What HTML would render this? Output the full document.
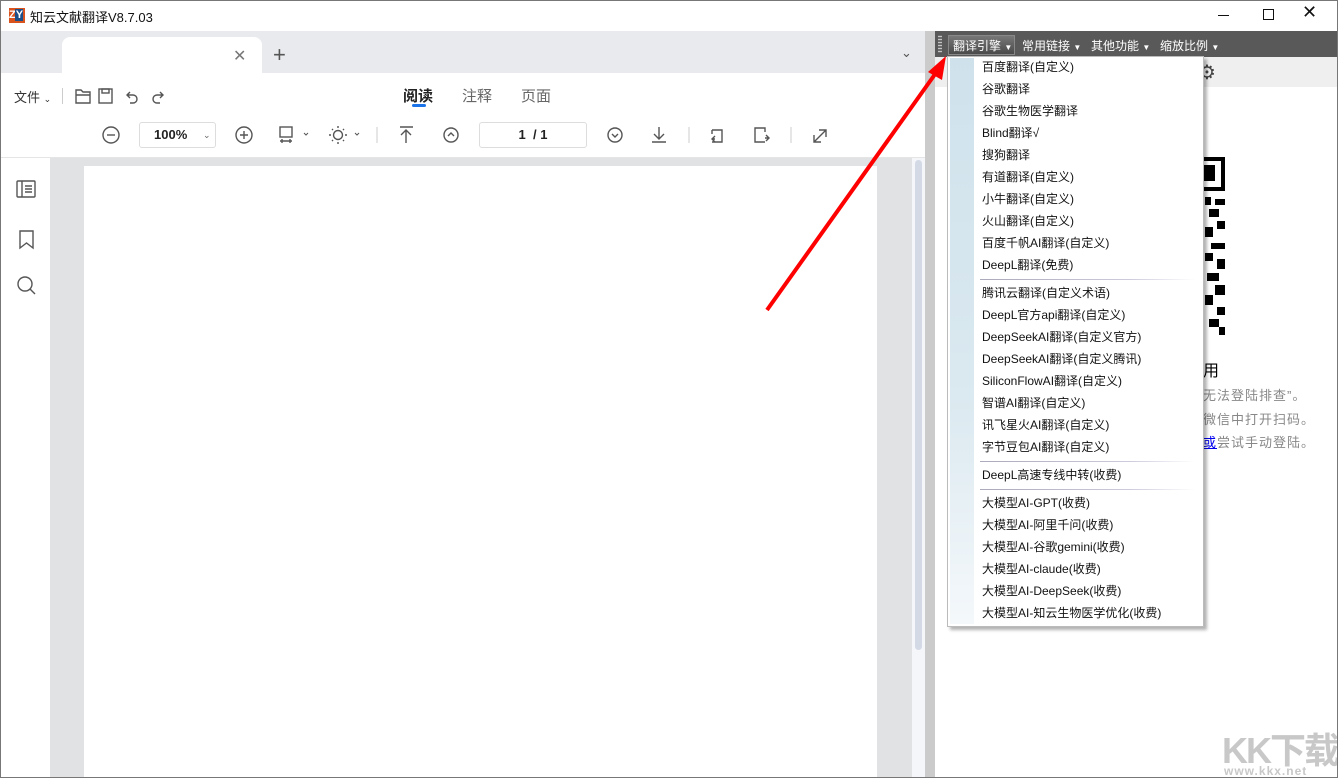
<!DOCTYPE html>
<html><head><meta charset="utf-8"><style>
*{margin:0;padding:0;box-sizing:border-box}
body{width:1338px;height:778px;overflow:hidden;position:relative;background:#fff;font-family:"Liberation Sans","Noto Sans CJK SC",sans-serif;font-size:13px;color:#333}
.a{position:absolute}
.mi{position:absolute;left:982px;font-size:12px;color:#111;height:22px;line-height:22px;white-space:nowrap}
.sep{position:absolute;left:980px;width:215px;height:1px;background:linear-gradient(90deg,#aab,#ccd 70%,#fff)}
.ic{stroke:#555;fill:none;stroke-width:1.4}
</style></head><body>
<div class="a" style="left:0;top:0;width:1338px;height:778px;border:1px solid #777;pointer-events:none;z-index:9"></div>
<!-- title -->
<div class="a" style="left:9px;top:8px;width:16px;height:15px;background:#d9531e;color:#fff;font:bold 11px 'Liberation Sans';line-height:15px;letter-spacing:-1px">Z<span style="background:#1b4f8a;padding:0 1px">Y</span></div>
<div class="a" style="left:30px;top:7px;font-size:13px;color:#111">知云文献翻译V8.7.03</div>
<div class="a" style="left:1218px;top:15px;width:11px;height:1px;background:#111"></div>
<div class="a" style="left:1263px;top:9px;width:11px;height:11px;border:1px solid #111"></div>
<div class="a" style="left:1302px;top:2px;font-size:18px;color:#111">✕</div>
<!-- tab bar -->
<div class="a" style="left:1px;top:31px;width:927px;height:42px;background:#e8eaed"></div>
<div class="a" style="left:62px;top:37px;width:200px;height:36px;background:#fff;border-radius:8px 8px 0 0"></div>
<div class="a" style="left:233px;top:46px;font-size:16px;color:#777">✕</div>
<div class="a" style="left:273px;top:42px;font-size:22px;color:#555">+</div>
<div class="a" style="left:901px;top:45px;font-size:13px;color:#555">⌄</div>
<!-- toolbar -->
<div class="a" style="left:14px;top:87px;font-size:13px">文件 <span style="font-size:9px">⌄</span></div>
<div class="a" style="left:62px;top:88px;width:1px;height:16px;background:#ccc"></div>
<svg class="a" style="left:74px;top:86px" width="100" height="20"><path class="ic" d="M2 4h5l2 2h7v11H2z M2 9h14" stroke="#777"/><rect x="25" y="3" width="13" height="14" class="ic" stroke="#aaa"/><rect x="28" y="3" width="7" height="4" class="ic" stroke="#aaa"/><path class="ic" stroke="#aaa" d="M56 6l-3 3 3 3M53 9h6a4 4 0 0 1 0 8h-3"/><path class="ic" stroke="#aaa" d="M86 6l3 3-3 3M89 9h-6a4 4 0 0 0 0 8h3"/></svg>
<div class="a" style="left:403px;top:85px;font-size:15px;font-weight:bold;color:#222">阅读</div>
<div class="a" style="left:412px;top:104px;width:14px;height:3px;background:#1a73e8;border-radius:2px"></div>
<div class="a" style="left:462px;top:85px;font-size:15px;color:#666">注释</div>
<div class="a" style="left:521px;top:85px;font-size:15px;color:#666">页面</div>
<svg class="a" style="left:100px;top:122px" width="740" height="26">
<g class="ic" stroke="#444"><circle cx="11" cy="13" r="8"/><path d="M7 13h8"/><circle cx="144" cy="13" r="8"/><path d="M140 13h8M144 9v8"/>
<rect x="180" y="5" width="12" height="10"/><path d="M180 19h12M182 17v4M190 17v4"/><path d="M204 11l2 2 2-2" stroke-width="1"/>
<circle cx="238" cy="13" r="4.5"/><path d="M238 4v2M238 20v2M229 13h2M245 13h2M232 7l1 1M243 18l1 1M232 19l1-1M243 8l1-1"/><path d="M255 11l2 2 2-2" stroke-width="1"/></g>
<path d="M277 5v16" stroke="#ccc"/>
<g class="ic" stroke="#999"><path d="M300 5h13M306 21V8M301 13l5-5 5 5"/><circle cx="351" cy="13" r="7"/><path d="M348 14l3-3 3 3"/>
<circle cx="515" cy="13" r="7"/><path d="M512 12l3 3 3-3"/><path d="M559 5v12M554 12l5 5 5-5M552 20h14"/></g>
<path d="M589 5v16M691 5v16" stroke="#ccc"/>
<g class="ic" stroke="#666"><path d="M612 8h10v12h-10M612 8v4M612 17l3 0M615 14l-3 3 3 3"/><path d="M665 20h-10V6h10v4M665 16h3M666 13l3 3-3 3"/><path d="M714 20l12-12M719 8h7v7M714 13v7h7"/></g>
</svg>
<div class="a" style="left:139px;top:122px;width:77px;height:26px;border:1px solid #ddd;border-radius:3px;font-size:13px;font-weight:bold;line-height:24px;padding-left:14px;color:#222">100%<span style="position:absolute;left:63px;top:0;font-size:9px;color:#666;font-weight:normal">⌄</span></div>
<div class="a" style="left:479px;top:122px;width:108px;height:26px;border:1px solid #ddd;border-radius:3px;font-size:13px;font-weight:bold;line-height:24px;text-align:center;color:#222">1 &nbsp;/ 1</div>
<!-- content -->
<div class="a" style="left:1px;top:157px;width:927px;height:1px;background:#e5e5e5"></div>
<svg class="a" style="left:14px;top:178px" width="26" height="120"><g class="ic" stroke="#666"><rect x="3" y="3" width="18" height="16" rx="1"/><path d="M8 3v16M11 8h7M11 11h7M11 14h7"/><path d="M6 53h13v17l-6.5-5-6.5 5z"/><circle cx="11" cy="106" r="7"/><path d="M16 111l5 5"/></g></svg>
<div class="a" style="left:50px;top:158px;width:862px;height:620px;background:#e1e2e4"></div>
<div class="a" style="left:84px;top:166px;width:793px;height:612px;background:#fff"></div>
<div class="a" style="left:912px;top:158px;width:13px;height:620px;background:#f4f6fa"></div>
<div class="a" style="left:915px;top:160px;width:7px;height:490px;background:#d4d9e6;border-radius:4px"></div>
<div class="a" style="left:925px;top:31px;width:10px;height:747px;background:#cbcbcb"></div>
<!-- right panel -->
<div class="a" style="left:935px;top:31px;width:403px;height:26px;background:#595959"></div>
<div class="a" style="left:938px;top:35px;width:4px;height:18px;background:radial-gradient(circle,#ddd 40%,transparent 50%) 0 0/2px 3px"></div>
<div class="a" style="left:948px;top:35px;width:67px;height:20px;background:linear-gradient(#777,#4a4a4a);border:1px solid #888"></div>
<div class="a" style="left:953px;top:37px;font-size:12px;color:#fff;white-space:nowrap">翻译引擎 <span style="font-size:8px">▼</span></div>
<div class="a" style="left:1022px;top:37px;font-size:12px;color:#fff;white-space:nowrap">常用链接 <span style="font-size:8px">▼</span></div>
<div class="a" style="left:1091px;top:37px;font-size:12px;color:#fff;white-space:nowrap">其他功能 <span style="font-size:8px">▼</span></div>
<div class="a" style="left:1160px;top:37px;font-size:12px;color:#fff;white-space:nowrap">缩放比例 <span style="font-size:8px">▼</span></div>
<div class="a" style="left:935px;top:57px;width:403px;height:30px;background:#efefef"></div>
<div class="a" style="left:1198px;top:60px;font-size:20px;color:#444">⚙</div>
<!-- QR fragment -->
<svg class="a" style="left:1203px;top:155px" width="24" height="185"><rect x="0" y="2" width="22" height="34" fill="#000"/><rect x="0" y="6" width="18" height="26" fill="#fff"/><rect x="0" y="10" width="12" height="16" fill="#000"/>
<g fill="#000"><rect x="2" y="42" width="6" height="8"/><rect x="12" y="44" width="10" height="6"/><rect x="6" y="54" width="10" height="8"/><rect x="14" y="66" width="8" height="8"/><rect x="2" y="72" width="8" height="10"/><rect x="8" y="88" width="14" height="6"/><rect x="2" y="98" width="8" height="8"/><rect x="14" y="104" width="8" height="10"/><rect x="4" y="118" width="12" height="8"/><rect x="12" y="130" width="10" height="10"/><rect x="2" y="140" width="8" height="10"/><rect x="14" y="152" width="8" height="8"/><rect x="6" y="164" width="10" height="8"/><rect x="16" y="172" width="6" height="8"/></g></svg>
<div class="a" style="left:1203px;top:357px;font-size:16px;color:#000">用</div>
<div class="a" style="left:1203px;top:385px;font-size:13px;color:#888;white-space:nowrap;letter-spacing:1px">无法登陆排查”。</div>
<div class="a" style="left:1203px;top:409px;font-size:13px;color:#888;white-space:nowrap;letter-spacing:1px">微信中打开扫码。</div>
<div class="a" style="left:1203px;top:432px;font-size:13px;color:#888;white-space:nowrap;letter-spacing:1px"><span style="color:#00e;text-decoration:underline">或</span>尝试手动登陆。</div>
<!-- menu -->
<div class="a" style="left:947px;top:56px;width:257px;height:571px;background:#fff;border:1px solid #bbb;box-shadow:3px 3px 3px rgba(0,0,0,.3)"></div>
<div class="a" style="left:950px;top:58px;width:24px;height:566px;background:linear-gradient(#cfe2ec,#dbe9f0 60%,#f4f8fb)"></div>
<div class="mi" style="top:56px">百度翻译(自定义)</div>
<div class="mi" style="top:78px">谷歌翻译</div>
<div class="mi" style="top:100px">谷歌生物医学翻译</div>
<div class="mi" style="top:122px">Blind翻译√</div>
<div class="mi" style="top:144px">搜狗翻译</div>
<div class="mi" style="top:166px">有道翻译(自定义)</div>
<div class="mi" style="top:188px">小牛翻译(自定义)</div>
<div class="mi" style="top:210px">火山翻译(自定义)</div>
<div class="mi" style="top:232px">百度千帆AI翻译(自定义)</div>
<div class="mi" style="top:254px">DeepL翻译(免费)</div>
<div class="sep" style="top:279px"></div>
<div class="mi" style="top:282px">腾讯云翻译(自定义术语)</div>
<div class="mi" style="top:304px">DeepL官方api翻译(自定义)</div>
<div class="mi" style="top:326px">DeepSeekAI翻译(自定义官方)</div>
<div class="mi" style="top:348px">DeepSeekAI翻译(自定义腾讯)</div>
<div class="mi" style="top:370px">SiliconFlowAI翻译(自定义)</div>
<div class="mi" style="top:392px">智谱AI翻译(自定义)</div>
<div class="mi" style="top:414px">讯飞星火AI翻译(自定义)</div>
<div class="mi" style="top:436px">字节豆包AI翻译(自定义)</div>
<div class="sep" style="top:461px"></div>
<div class="mi" style="top:464px">DeepL高速专线中转(收费)</div>
<div class="sep" style="top:489px"></div>
<div class="mi" style="top:492px">大模型AI-GPT(收费)</div>
<div class="mi" style="top:514px">大模型AI-阿里千问(收费)</div>
<div class="mi" style="top:536px">大模型AI-谷歌gemini(收费)</div>
<div class="mi" style="top:558px">大模型AI-claude(收费)</div>
<div class="mi" style="top:580px">大模型AI-DeepSeek(收费)</div>
<div class="mi" style="top:602px">大模型AI-知云生物医学优化(收费)</div>
<!-- arrow -->
<svg class="a" style="left:0;top:0" width="1338" height="778"><path d="M767 310L938 70" stroke="#f00" stroke-width="4"/><path d="M946 56L928 72 942 80z" fill="#f00"/></svg>
<!-- watermark -->
<div class="a" style="left:1222px;top:722px;font-size:36px;font-weight:bold;color:#c8c8c8;letter-spacing:-2px">KK下载</div>
<div class="a" style="left:1224px;top:764px;font-size:12px;font-weight:bold;color:#c8c8c8;letter-spacing:1px">www.kkx.net</div>
</body></html>
